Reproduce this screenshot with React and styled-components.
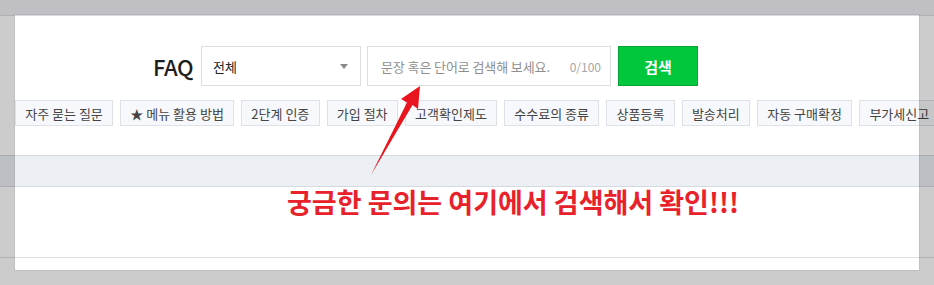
import React from "react";
import styled, { createGlobalStyle } from "styled-components";

const GlobalStyle = createGlobalStyle`
  html, body { margin: 0; padding: 0; background: #fff; }
  body { font-family: "Noto Sans CJK KR", "Noto Sans", sans-serif; }
  * { box-sizing: border-box; }
`;

const Page = styled.div`
  position: relative;
  width: 934px;
  height: 285px;
  overflow: hidden;
  background: #fff;
`;

const HeaderStrip = styled.div`
  height: 16px;
  background: #f0f1f6;
  border-bottom: 1px solid #dcdde2;
`;

const SearchSection = styled.div`
  padding: 30px 0 0 153px;
`;

const SearchRow = styled.div`
  display: flex;
  align-items: center;
  height: 40px;
`;

const FaqLabel = styled.span`
  font-family: "Noto Sans CJK KR", "Noto Sans", sans-serif;
  font-size: 22px;
  font-weight: 500;
  color: #1e1e1e;
  letter-spacing: -0.5px;
  margin-right: 10px;
  width: 38px;
`;

const SelectBox = styled.div`
  width: 160px;
  height: 40px;
  border: 1px solid #dedede;
  background: #fff;
  display: flex;
  align-items: center;
  justify-content: space-between;
  padding: 0 12px 0 11px;
  font-size: 13px;
  color: #222;
  margin-right: 6px;
`;

const Caret = styled.span`
  width: 0;
  height: 0;
  border-left: 4.5px solid transparent;
  border-right: 4.5px solid transparent;
  border-top: 5px solid #8a8a8a;
`;

const SearchInput = styled.div`
  width: 244px;
  height: 40px;
  border: 1px solid #dedede;
  background: #fff;
  display: flex;
  align-items: center;
  justify-content: space-between;
  padding: 0 9px 0 13px;
  margin-right: 7px;
`;

const Placeholder = styled.span`
  font-size: 13px;
  color: #8f8f8f;
  letter-spacing: -0.1px;
`;

const Counter = styled.span`
  font-family: "Noto Sans CJK KR", sans-serif;
  font-size: 12px;
  color: #a6a6a6;
`;

const SearchButton = styled.button`
  width: 80px;
  height: 40px;
  border: 1px solid #0ba43a;
  background: #00c73c;
  color: #fff;
  font-family: "Noto Sans CJK KR", sans-serif;
  font-size: 15px;
  font-weight: 700;
  padding: 0;
  cursor: pointer;
`;

const TagRow = styled.div`
  display: flex;
  gap: 7px;
  margin-top: 14px;
  padding-left: 15px;
  white-space: nowrap;
`;

const Tag = styled.span`
  flex: none;
  height: 26px;
  display: flex;
  align-items: center;
  padding: 0 9.25px;
  border: 1px solid #dde1e8;
  background: #f7f8fb;
  font-size: 13px;
  color: #444;
`;

const ListHeader = styled.div`
  margin-top: 29px;
  height: 32px;
  background: #eceff4;
  border-top: 1px solid #d6d9df;
  border-bottom: 1px solid #d6d9df;
`;

const ListBody = styled.div`
  height: 71px;
  border-bottom: 1px solid #dfe0e6;
`;

const Spotlight = styled.div`
  position: absolute;
  left: 15px;
  top: 15px;
  width: 904px;
  height: 255px;
  box-shadow: 0 0 0 1px rgba(0, 0, 0, 0.06), 0 0 0 2000px rgba(0, 0, 0, 0.2);
  pointer-events: none;
`;

const ArrowSvg = styled.svg`
  position: absolute;
  left: 0;
  top: 0;
  pointer-events: none;
`;

const Caption = styled.div`
  position: absolute;
  left: 287px;
  top: 187px;
  font-family: "Noto Sans CJK KR", sans-serif;
  font-size: 27px;
  line-height: 30px;
  font-weight: 700;
  color: #e8222b;
  white-space: nowrap;
`;

const tags = [
  "자주 묻는 질문",
  "★ 메뉴 활용 방법",
  "2단계 인증",
  "가입 절차",
  "고객확인제도",
  "수수료의 종류",
  "상품등록",
  "발송처리",
  "자동 구매확정",
  "부가세신고",
];

export default function App() {
  return (
    <>
      <GlobalStyle />
      <Page>
        <HeaderStrip />
        <SearchSection>
          <SearchRow>
            <FaqLabel>FAQ</FaqLabel>
            <SelectBox>
              <span>전체</span>
              <Caret />
            </SelectBox>
            <SearchInput>
              <Placeholder>문장 혹은 단어로 검색해 보세요.</Placeholder>
              <Counter>0/100</Counter>
            </SearchInput>
            <SearchButton>검색</SearchButton>
          </SearchRow>
        </SearchSection>
        <TagRow>
          {tags.map((t) => (
            <Tag key={t}>{t}</Tag>
          ))}
        </TagRow>
        <ListHeader />
        <ListBody />
        <Spotlight />
        <ArrowSvg width="934" height="285" viewBox="0 0 934 285">
          <polygon
            points="420,86 401,99 407,102.5 371,175 412.5,105 418,109"
            fill="#e8151f"
          />
        </ArrowSvg>
        <Caption>궁금한 문의는 여기에서 검색해서 확인!!!</Caption>
      </Page>
    </>
  );
}
